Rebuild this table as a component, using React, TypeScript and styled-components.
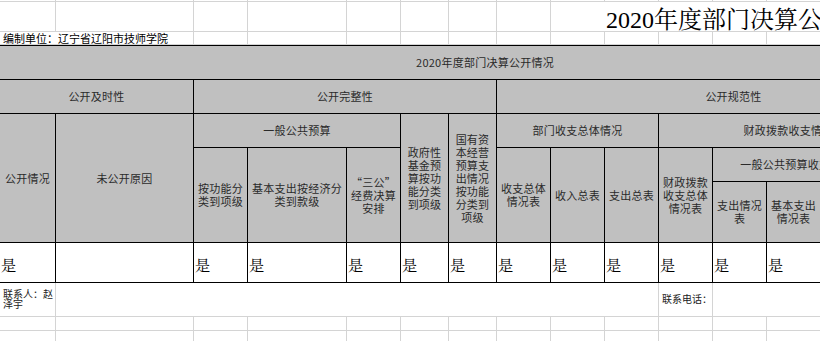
import React from 'react';
import styled, { createGlobalStyle } from 'styled-components';

// column widths copied off the sheet; the last three run past the window
const COLUMNS = [56, 138, 54, 99, 54, 48, 48, 54, 54, 54, 54, 54, 54, 60, 38, 52];
const template = COLUMNS.map((w) => `${w}px`).join(' ');

const GRID_LINE = '#d4d4d4';
const HEAD_FILL = '#c0c0c0';

const CJK_SANS = `'Noto Sans CJK SC', 'Noto Sans', sans-serif`;
const CJK_SERIF = `'Liberation Serif', 'Noto Serif CJK SC', 'Noto Sans CJK SC', serif`;

type Head = {
  lines: string[];
  cols?: number;
  rows?: number;
};

const headCells: Head[] = [
  // row 2
  { lines: ['公开及时性'], cols: 2 },
  { lines: ['公开完整性'], cols: 5 },
  { lines: ['公开规范性'], cols: 9 },
  // row 3
  { lines: ['公开情况'], rows: 3 },
  { lines: ['未公开原因'], rows: 3 },
  { lines: ['一般公共预算'], cols: 3 },
  { lines: ['政府性', '基金预', '算按功', '能分类', '到项级'], rows: 3 },
  { lines: ['国有资', '本经营', '预算支', '出情况', '按功能', '分类到', '项级'], rows: 3 },
  { lines: ['部门收支总体情况'], cols: 3 },
  { lines: ['财政拨款收支情况'], cols: 5 },
  { lines: [''], rows: 3 },
  // row 4
  { lines: ['按功能分', '类到项级'], rows: 2 },
  { lines: ['基本支出按经济分', '类到款级'], rows: 2 },
  { lines: ['“三公”', '经费决算', '安排'], rows: 2 },
  { lines: ['收支总体', '情况表'], rows: 2 },
  { lines: ['收入总表'], rows: 2 },
  { lines: ['支出总表'], rows: 2 },
  { lines: ['财政拨款', '收支总体', '情况表'], rows: 2 },
  { lines: ['一般公共预算收支情况'], cols: 3 },
  { lines: [''], rows: 2 },
  // row 5
  { lines: ['支出情况', '表'] },
  { lines: ['基本支出', '情况表'] },
  { lines: [''] },
];

const App = () => {
  return (
    <>
      <GlobalStyle />
      <S.Page>
        <S.Sheet $rows="2px 30px 13px">
          {COLUMNS.map((_, i) => (
            <S.GridCell key={`top-${i}`} />
          ))}
          {COLUMNS.slice(0, 8).map((_, i) => (
            <S.GridCell key={`title-${i}`} />
          ))}
          <S.TitleCell $span={8}>2020年度部门决算公开情况表</S.TitleCell>
          <S.GridCell $span={2}>
            <S.UnitText>编制单位：辽宁省辽阳市技师学院</S.UnitText>
          </S.GridCell>
          {COLUMNS.slice(2).map((_, i) => (
            <S.GridCell key={`unit-${i}`} />
          ))}
        </S.Sheet>

        <S.Table>
          <S.HeadCell $cols={16}>
            <S.HeadText>
              <S.Line>2020年度部门决算公开情况</S.Line>
            </S.HeadText>
          </S.HeadCell>
          {headCells.map((h, i) => (
            <S.HeadCell key={i} $cols={h.cols ?? 1} $rows={h.rows ?? 1}>
              <S.HeadText>
                {h.lines.map((l, j) => (
                  <S.Line key={j}>{l}</S.Line>
                ))}
              </S.HeadText>
            </S.HeadCell>
          ))}
          {COLUMNS.map((_, i) => (
            <S.DataCell key={`data-${i}`}>{i === 1 ? '' : '是'}</S.DataCell>
          ))}
        </S.Table>

        <S.Sheet $rows="34px 14px 14px">
          <S.GridCell>
            <S.NoteText>
              <S.NoteLine>联系人：赵</S.NoteLine>
              <S.NoteLine>泽宇</S.NoteLine>
            </S.NoteText>
          </S.GridCell>
          <S.GridCell $span={9} />
          <S.GridCell>
            <S.NoteText>
              <S.NoteLine>联系电话：</S.NoteLine>
            </S.NoteText>
          </S.GridCell>
          <S.GridCell $span={5} />
          {COLUMNS.map((_, i) => (
            <S.GridCell key={`b1-${i}`} />
          ))}
          {COLUMNS.map((_, i) => (
            <S.GridCell key={`b2-${i}`} />
          ))}
        </S.Sheet>
      </S.Page>
    </>
  );
};

const GlobalStyle = createGlobalStyle`
  html, body {
    margin: 0;
    padding: 0;
    background: #fff;
    overflow: hidden;
  }
  body {
    font-family: ${CJK_SANS};
    color: #000;
  }
`;

const S = {
  Page: styled.div`
    width: 970px;
  `,
  Sheet: styled.div<{ $rows: string }>`
    display: grid;
    grid-template-columns: ${template};
    grid-template-rows: ${(p) => p.$rows};
  `,
  GridCell: styled.div<{ $span?: number }>`
    grid-column: span ${(p) => p.$span ?? 1};
    box-sizing: border-box;
    border-right: 1px solid ${GRID_LINE};
    border-bottom: 1px solid ${GRID_LINE};
    display: flex;
    align-items: center;
    min-width: 0;
  `,
  TitleCell: styled.div<{ $span: number }>`
    grid-column: span ${(p) => p.$span};
    box-sizing: border-box;
    border-bottom: 1px solid ${GRID_LINE};
    display: flex;
    align-items: center;
    padding: 1px 0 0 55px;
    font-family: ${CJK_SERIF};
    font-size: 24px;
    white-space: nowrap;
    overflow: hidden;
  `,
  UnitText: styled.span`
    font-size: 11px;
    line-height: 12px;
    padding-left: 3px;
    white-space: nowrap;
  `,
  NoteText: styled.div`
    display: flex;
    flex-direction: column;
    padding: 0 2px 2px 3px;
    font-size: 10px;
    color: #222;
    white-space: nowrap;
  `,
  NoteLine: styled.span`
    display: block;
    height: 10px;
    line-height: 10px;
  `,
  Table: styled.div`
    display: grid;
    grid-template-columns: ${template};
    grid-template-rows: 34px 34px 34px 34px 61px 40px;
    border-top: 1px solid #000;
  `,
  HeadCell: styled.div<{ $cols?: number; $rows?: number }>`
    grid-column: span ${(p) => p.$cols ?? 1};
    grid-row: span ${(p) => p.$rows ?? 1};
    box-sizing: border-box;
    background: ${HEAD_FILL};
    border-right: 1px solid #000;
    border-bottom: 1px solid #000;
    display: flex;
    align-items: center;
    justify-content: center;
    overflow: hidden;
  `,
  HeadText: styled.div`
    display: flex;
    flex-direction: column;
    align-items: center;
    font-size: 11px;
    letter-spacing: 0.25px;
    color: #2a2a2a;
    white-space: nowrap;
  `,
  Line: styled.span`
    display: block;
    height: 13px;
    line-height: 13px;
  `,
  DataCell: styled.div`
    box-sizing: border-box;
    background: #fff;
    border-right: 1px solid #000;
    border-bottom: 1px solid #000;
    display: flex;
    align-items: center;
    padding: 4px 0 0 1px;
    font-family: ${CJK_SERIF};
    font-size: 15px;
  `,
};

export default App;
